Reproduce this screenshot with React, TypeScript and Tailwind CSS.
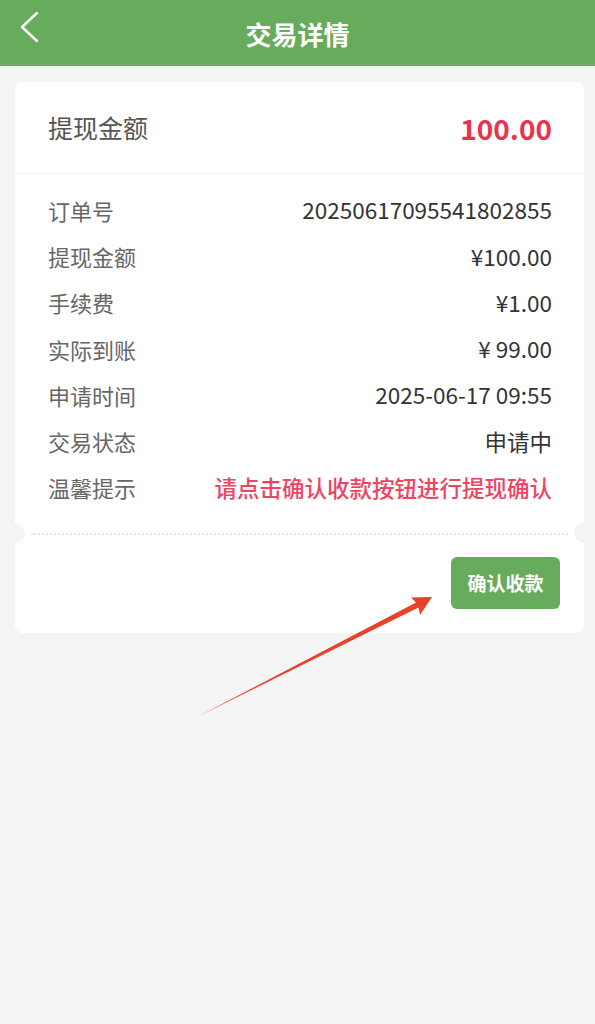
const rows = [
  { label: "订单号", value: "20250617095541802855" },
  { label: "提现金额", value: "¥100.00" },
  { label: "手续费", value: "¥1.00" },
  { label: "实际到账", value: "¥ 99.00" },
  { label: "申请时间", value: "2025-06-17 09:55" },
  { label: "交易状态", value: "申请中" },
];

const font = { fontFamily: '"Noto Sans CJK SC", "Noto Sans", sans-serif' };

const App = () => {
  return (
    <div className="relative min-h-[1024px] bg-[#f4f4f4]" style={font}>
      <header className="relative flex h-[66px] items-center justify-center bg-[#67ab5c]">
        <svg className="absolute left-0 top-0" width="60" height="56" fill="none">
          <polyline points="37,13 22,27 37,41" stroke="#fff" strokeWidth="2.4" strokeLinecap="round" strokeLinejoin="round" />
        </svg>
        <h1 className="text-[26px] font-bold text-white">交易详情</h1>
      </header>

      <main className="ml-[15px] mr-[11px] pt-4">
        <div className="relative rounded-lg bg-white">
          <div className="flex h-[92px] items-center justify-between border-b border-[#f2f2f2] pl-[33px] pr-[32px]">
            <span className="text-[25px] text-[#555]">提现金额</span>
            <span className="text-[28px] font-bold text-[#e8334f]">100.00</span>
          </div>

          <dl className="pl-[33px] pr-[32px] pt-[13px] pb-[22px]">
            {rows.map((r) => (
              <div key={r.label} className="flex h-[46.3px] items-center justify-between">
                <dt className="text-[22px] text-[#666]">{r.label}</dt>
                <dd className="text-[22.5px] text-[#333]">{r.value}</dd>
              </div>
            ))}
            <div className="flex h-[46.3px] items-center justify-between">
              <dt className="text-[22px] text-[#666]">温馨提示</dt>
              <dd className="text-[22.5px] font-medium text-[#ee4463]">请点击确认收款按钮进行提现确认</dd>
            </div>
          </dl>

          <div className="relative h-0">
            <div className="mx-[16px] border-t-2 border-dotted border-[#e4e4e4]" />
            <span className="absolute -left-[10px] -top-[10px] h-5 w-5 rounded-full bg-[#f4f4f4]" />
            <span className="absolute -right-[10px] -top-[10px] h-5 w-5 rounded-full bg-[#f4f4f4]" />
          </div>

          <div className="flex justify-end px-6 py-6">
            <button className="h-[52px] w-[109px] rounded-md bg-[#67ab5c] text-[19px] font-bold text-white">
              确认收款
            </button>
          </div>
        </div>
      </main>

      <svg className="pointer-events-none absolute left-0 top-0" width="595" height="1024">
        <polygon
          points="432,597 420,615 418.5,607.5 198,716.5 416,602.5 411,597.5"
          fill="#e8412c"
        />
      </svg>
    </div>
  );
};

export default App;
